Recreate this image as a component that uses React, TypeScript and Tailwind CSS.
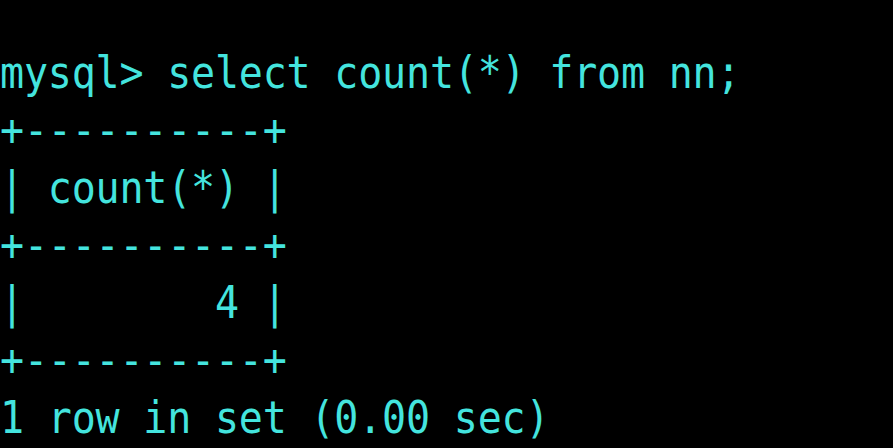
import React from "react";

const lines = [
  "mysql> select count(*) from nn;",
  "+----------+",
  "| count(*) |",
  "+----------+",
  "|        4 |",
  "+----------+",
  "1 row in set (0.00 sec)",
];

export default function App() {
  return (
    <div className="w-[893px] h-[448px] bg-black overflow-hidden">
      <div className="pt-[45.5px] pl-0">
        {lines.map((l, i) => (
          <div
            key={i}
            className="whitespace-pre text-[40px] leading-[57.5px] tracking-[-0.2px] text-[#44e4de] font-['DejaVu_Sans_Mono',monospace] scale-y-[1.12] origin-[0_73%]"
          >
            {l}
          </div>
        ))}
      </div>
    </div>
  );
}
